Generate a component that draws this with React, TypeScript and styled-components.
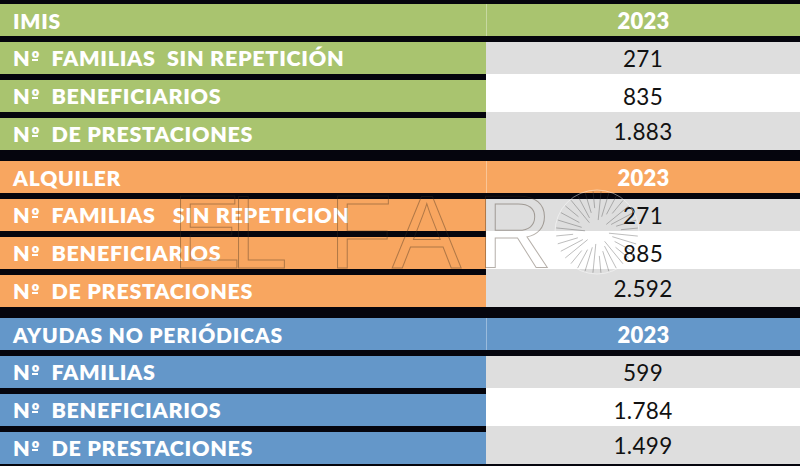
import React from "react";
import styled, { createGlobalStyle } from "styled-components";

type Tone = "green" | "orange" | "blue";

const tones: Record<Tone, string> = {
  green: "#a9c46f",
  orange: "#f8a660",
  blue: "#6497c9",
};

interface Section {
  title: string;
  year: string;
  tone: Tone;
  rows: { label: string; value: string }[];
}

// labels start with "Nº", the rest is kept as typed in the sheet
const sections: Section[] = [
  {
    title: "IMIS",
    year: "2023",
    tone: "green",
    rows: [
      { label: "  FAMILIAS  SIN REPETICIÓN", value: "271" },
      { label: "  BENEFICIARIOS", value: "835" },
      { label: "  DE PRESTACIONES", value: "1.883" },
    ],
  },
  {
    title: "ALQUILER",
    year: "2023",
    tone: "orange",
    rows: [
      { label: "  FAMILIAS   SIN REPETICION", value: "271" },
      { label: "  BENEFICIARIOS", value: "885" },
      { label: "  DE PRESTACIONES", value: "2.592" },
    ],
  },
  {
    title: "AYUDAS NO PERIÓDICAS",
    year: "2023",
    tone: "blue",
    rows: [
      { label: "  FAMILIAS", value: "599" },
      { label: "  BENEFICIARIOS", value: "1.784" },
      { label: "  DE PRESTACIONES", value: "1.499" },
    ],
  },
];

const GlobalStyle = createGlobalStyle`
  html, body {
    margin: 0;
    padding: 0;
    background: #05050d;
  }
  body {
    font-family: Lato, "Open Sans", sans-serif;
  }
`;

const App: React.FC = () => {
  return (
    <>
      <GlobalStyle />
      <Page>
        <Table>
          {sections.map((s) => (
            <Block key={s.title}>
              <HeaderRow $tone={s.tone}>
                <HeaderLabel>{s.title}</HeaderLabel>
                <HeaderYear>{s.year}</HeaderYear>
              </HeaderRow>
              <Rows>
                {s.rows.map((r, i) => (
                  <DataRow key={r.label} $first={i === 0}>
                    <LabelCell $tone={s.tone} $first={i === 0}>
                      N<Ord>º</Ord>
                      {r.label}
                    </LabelCell>
                    <ValueCell $shade={i % 2 === 0 ? "grey" : "white"}>
                      {r.value}
                    </ValueCell>
                  </DataRow>
                ))}
              </Rows>
            </Block>
          ))}
        </Table>

        <Watermark aria-hidden>
          <WmLetter $w={58}>E</WmLetter>
          <WmLetter $w={99}>L</WmLetter>
          <WmLetter $w={63}>F</WmLetter>
          <WmLetter $w={85}>A</WmLetter>
          <WmLetter $w={76}>R</WmLetter>
          <Sun />
        </Watermark>
      </Page>
    </>
  );
};

export default App;

const Sun: React.FC = () => {
  const n = 32;
  const rays = Array.from({ length: n }, (_, i) => {
    const a = (i / n) * Math.PI * 2 + 0.1;
    const r1 = 12 + (i % 4) * 4;
    const r2 = 41;
    return (
      <line
        key={i}
        x1={44 + Math.cos(a) * r1}
        y1={44 + Math.sin(a) * r1}
        x2={44 + Math.cos(a) * r2}
        y2={44 + Math.sin(a) * r2}
      />
    );
  });
  return (
    <SunSvg width="88" height="88" viewBox="0 0 88 88">
      <circle cx="44" cy="44" r="42" fill="none" stroke="rgba(255,255,255,0.45)" strokeWidth="1" />
      <g stroke="rgba(70,70,70,0.45)" strokeWidth="0.8">{rays}</g>
    </SunSvg>
  );
};

const Page = styled.div`
  position: relative;
  width: 800px;
  height: 466px;
  overflow: hidden;
  background: #05050d;
`;

const Table = styled.div`
  display: flex;
  flex-direction: column;
  gap: 11px;
  padding: 4px 0;
`;

const Block = styled.section`
  display: flex;
  flex-direction: column;
  gap: 6px;
`;

const HeaderRow = styled.div<{ $tone: Tone }>`
  display: grid;
  grid-template-columns: 486px 1fr;
  height: 32px;
  background: ${(p) => tones[p.$tone]};
  color: #fff;
  font-weight: 800;
  font-size: 21px;
  letter-spacing: 0.8px;
`;

const HeaderLabel = styled.div`
  display: flex;
  align-items: center;
  padding-left: 13px;
`;

const HeaderYear = styled.div`
  display: flex;
  align-items: center;
  justify-content: center;
  border-left: 1px solid rgba(255, 255, 255, 0.35);
  font-size: 22px;
  letter-spacing: 0.3px;
`;

const Rows = styled.div`
  display: flex;
  flex-direction: column;
`;

const DataRow = styled.div<{ $first: boolean }>`
  display: grid;
  grid-template-columns: 486px 1fr;
  height: ${(p) => (p.$first ? 32 : 38)}px;
`;

const LabelCell = styled.div<{ $tone: Tone; $first: boolean }>`
  display: flex;
  align-items: center;
  padding-left: 13px;
  border-top: ${(p) => (p.$first ? 0 : 6)}px solid #05050d;
  background: ${(p) => tones[p.$tone]};
  color: #fff;
  font-weight: 800;
  font-size: 21.5px;
  letter-spacing: 0.7px;
  white-space: pre;
`;

const Ord = styled.span`
  position: relative;
  font-size: 20px;
  margin-left: 1px;

  &::after {
    content: "";
    position: absolute;
    left: 1px;
    right: 2px;
    top: 13px;
    height: 2px;
    background: currentColor;
  }
`;

const ValueCell = styled.div<{ $shade: "grey" | "white" }>`
  display: flex;
  align-items: center;
  justify-content: center;
  background: ${(p) => (p.$shade === "grey" ? "#dedede" : "#ffffff")};
  color: #111;
  font-size: 22.5px;
  letter-spacing: 0.3px;
  padding-top: ${(p) => (p.$shade === "white" ? 6 : 0)}px;
`;

const Watermark = styled.div`
  position: absolute;
  left: 172px;
  top: 188px;
  display: flex;
  align-items: center;
  pointer-events: none;
`;

const WmLetter = styled.span<{ $w: number }>`
  width: ${(p) => p.$w}px;
  font-family: "Liberation Sans", Arial, sans-serif;
  font-size: 104px;
  line-height: 88px;
  color: transparent;
  -webkit-text-stroke: 1px rgba(60, 45, 30, 0.38);
`;

const SunSvg = styled.svg`
  flex: none;
`;
